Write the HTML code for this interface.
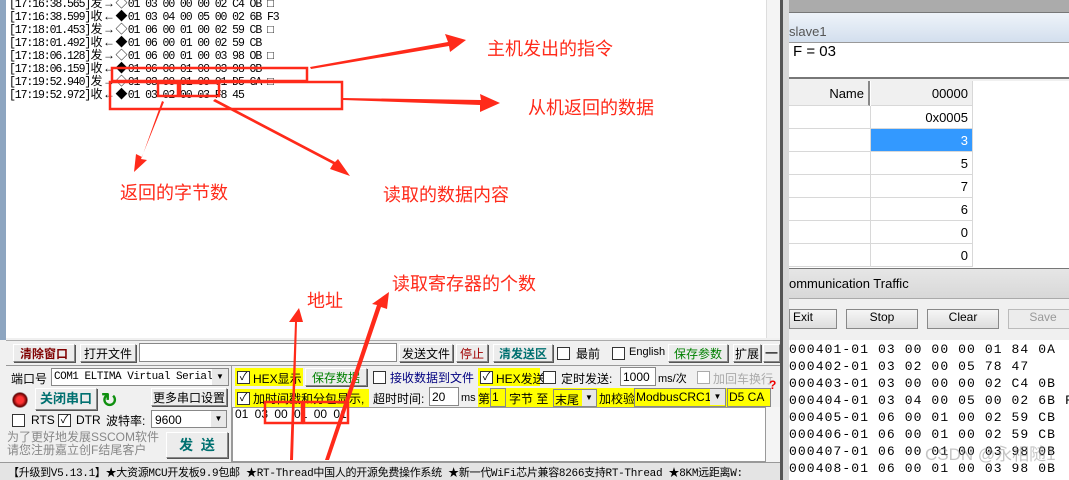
<!DOCTYPE html>
<html><head><meta charset="utf-8"><style>
*{margin:0;padding:0;box-sizing:border-box}
body{width:1069px;height:480px;overflow:hidden;background:#f0f0f0;position:relative;font-family:"Liberation Sans","Noto Sans CJK SC",sans-serif;font-size:12px}
.a{position:absolute;white-space:nowrap}
.m{font-family:"Liberation Mono","Noto Sans CJK SC",monospace}
.g{display:inline-block;width:12.5px;text-align:center;letter-spacing:0;font-size:12px}
.btn{position:absolute;background:#ececec;border:1px solid #888;border-top-color:#fff;border-left-color:#fff;box-shadow:1px 1px 0 #555;text-align:center;white-space:nowrap}
.cb{position:absolute;width:13px;height:13px;border:1px solid #333;background:#fff;font-size:11px;line-height:11px;text-align:center}
.y{background:#ffff00}
.cell{position:absolute;border-bottom:1px solid #d8d8d8;border-right:1px solid #d8d8d8;background:#fff;text-align:right;padding-right:4px;font-size:13px}
</style></head><body>
<!-- left app -->
<div class="a" style="left:0;top:0;width:6px;height:340px;background:#8da5c0"></div>
<div class="a" style="left:6px;top:0;width:760px;height:338px;background:#fff"></div>
<div class="a" style="left:766px;top:0;width:14px;height:338px;background:#f4f4f4;border-left:1px solid #ddd"></div>
<div class="a" style="left:780px;top:0;width:3px;height:480px;background:#555"></div>
<div class="a" style="left:783px;top:0;width:6px;height:480px;background:#d8d8d8"></div>
<div class="a m" style="left:9px;top:-2px;font-size:11.5px;line-height:12px;letter-spacing:-1.1px">
[17:16:38.565]<span class="g">发</span><span class="g">→</span><span class="g">◇</span>01 03 00 00 00 02 C4 OB □<br>
[17:16:38.599]<span class="g">收</span><span class="g">←</span><span class="g">◆</span>01 03 04 00 05 00 02 6B F3<br>
[17:18:01.453]<span class="g">发</span><span class="g">→</span><span class="g">◇</span>01 06 00 01 00 02 59 CB □<br>
[17:18:01.492]<span class="g">收</span><span class="g">←</span><span class="g">◆</span>01 06 00 01 00 02 59 CB<br>
[17:18:06.128]<span class="g">发</span><span class="g">→</span><span class="g">◇</span>01 06 00 01 00 03 98 OB □<br>
[17:18:06.159]<span class="g">收</span><span class="g">←</span><span class="g">◆</span>01 06 00 01 00 03 98 OB<br>
[17:19:52.940]<span class="g">发</span><span class="g">→</span><span class="g">◇</span>01 03 00 01 00 01 D5 CA □<br>
[17:19:52.972]<span class="g">收</span><span class="g">←</span><span class="g">◆</span>01 03 02 00 03 F8 45</div>

<!-- toolbar row -->
<div class="a" style="left:6px;top:340px;width:774px;height:123px;background:#f0f0f0;border-top:1px solid #aaa"></div>
<div class="btn" style="left:13px;top:344px;width:62px;height:18px;color:#800000;font-weight:bold;font-size:12px">清除窗口</div>
<div class="btn" style="left:80px;top:344px;width:56px;height:18px">打开文件</div>
<div class="a" style="left:139px;top:343px;width:258px;height:19px;background:#fff;border:1px solid #888"></div>
<div class="btn" style="left:399px;top:344px;width:54px;height:18px">发送文件</div>
<div class="btn" style="left:456px;top:344px;width:32px;height:18px;color:#a00000">停止</div>
<div class="btn" style="left:493px;top:344px;width:60px;height:18px;color:#007070;font-weight:bold">清发送区</div>
<div class="cb" style="left:557px;top:347px"></div><div class="a" style="left:576px;top:345px">最前</div>
<div class="cb" style="left:612px;top:347px"></div><div class="a" style="left:629px;top:346px;font-size:11px">English</div>
<div class="btn" style="left:668px;top:344px;width:60px;height:18px;color:#008000">保存参数</div>
<div class="btn" style="left:733px;top:344px;width:28px;height:18px">扩展</div>
<div class="btn" style="left:763px;top:344px;width:17px;height:18px;font-weight:bold">—</div>

<div class="a" style="left:6px;top:365px;width:774px;height:1px;background:#999"></div>
<div class="a" style="left:11px;top:370px">端口号</div>
<div class="a m" style="left:51px;top:368px;width:178px;height:18px;background:#fff;border:1px solid #888;font-size:11px;padding:2px 2px;letter-spacing:-0.5px;overflow:hidden">COM1 ELTIMA Virtual Serial</div>
<div class="a" style="left:212px;top:369px;width:16px;height:16px;background:#e8e8e8;font-size:8px;text-align:center;line-height:16px">▼</div>
<div class="a" style="left:12px;top:392px;width:16px;height:16px;border-radius:50%;background:radial-gradient(#f33 30%,#600 60%,#bbb 70%)"></div>
<div class="btn" style="left:35px;top:388px;width:62px;height:22px;color:#007070;font-weight:bold;font-size:13px;line-height:20px">关闭串口</div>
<div class="a" style="left:101px;top:388px;color:#109010;font-size:20px;font-weight:bold">↻</div>
<div class="btn" style="left:151px;top:388px;width:76px;height:18px">更多串口设置</div>
<div class="cb" style="left:12px;top:414px"></div><div class="a" style="left:31px;top:413px">RTS</div>
<div class="cb" style="left:58px;top:414px">✓</div><div class="a" style="left:76px;top:413px">DTR</div>
<div class="a" style="left:106px;top:412px">波特率:</div>
<div class="a" style="left:151px;top:410px;width:76px;height:18px;background:#fff;border:1px solid #888;padding:2px 3px">9600</div>
<div class="a" style="left:211px;top:411px;width:15px;height:16px;background:#e8e8e8;font-size:8px;text-align:center;line-height:16px">▼</div>
<div class="a" style="left:7px;top:431px;color:#888;font-size:12px;line-height:13px">为了更好地发展SSCOM软件<br>请您注册嘉立创F结尾客户</div>
<div class="btn" style="left:166px;top:432px;width:62px;height:26px;color:#007070;font-weight:bold;font-size:14px;line-height:24px">发&nbsp;&nbsp;送</div>
<div class="a" style="left:231px;top:366px;width:1px;height:97px;background:#999"></div>

<div class="a y" style="left:235px;top:368px;width:68px;height:18px"></div>
<div class="cb" style="left:237px;top:371px">✓</div><div class="a" style="left:253px;top:370px;color:#000">HEX显示</div>
<div class="btn" style="left:305px;top:368px;width:62px;height:18px;color:#008000">保存数据</div>
<div class="cb" style="left:373px;top:371px"></div><div class="a" style="left:390px;top:369px;color:#000080">接收数据到文件</div>
<div class="a y" style="left:478px;top:368px;width:62px;height:18px"></div>
<div class="cb" style="left:480px;top:371px">✓</div><div class="a" style="left:496px;top:370px">HEX发送</div>
<div class="cb" style="left:543px;top:371px"></div><div class="a" style="left:561px;top:370px">定时发送:</div>
<div class="a" style="left:620px;top:367px;width:36px;height:19px;background:#fff;border:1px solid #888;padding:2px">1000</div>
<div class="a" style="left:658px;top:370px;font-size:11px">ms/次</div>
<div class="cb" style="left:697px;top:371px;border-color:#aaa"></div><div class="a" style="left:713px;top:370px;color:#aaa">加回车换行</div>
<div class="a" style="left:769px;top:378px;color:#e00;font-weight:bold;font-size:12px">?</div>

<div class="a y" style="left:235px;top:389px;width:134px;height:18px"></div>
<div class="cb" style="left:237px;top:392px">✓</div><div class="a" style="left:253px;top:390px">加时间戳和分包显示,</div>
<div class="a" style="left:373px;top:390px">超时时间:</div>
<div class="a" style="left:429px;top:387px;width:30px;height:19px;background:#fff;border:1px solid #888;padding:2px">20</div>
<div class="a" style="left:461px;top:392px;font-size:11px">ms</div>
<div class="a y" style="left:478px;top:388px;width:292px;height:20px"></div>
<div class="a" style="left:478px;top:390px">第</div>
<div class="a" style="left:490px;top:388px;width:16px;height:19px;border:1px solid #888;padding:1px">1</div>
<div class="a" style="left:509px;top:390px">字节 至</div>
<div class="a" style="left:553px;top:389px;width:44px;height:18px;border:1px solid #888;padding:1px">末尾</div>
<div class="a" style="left:582px;top:390px;width:14px;height:16px;background:#e8e8e8;font-size:8px;text-align:center;line-height:16px">▼</div>
<div class="a" style="left:599px;top:390px">加校验</div>
<div class="a" style="left:634px;top:388px;width:92px;height:19px;border:1px solid #888;padding:1px;overflow:hidden">ModbusCRC16</div>
<div class="a" style="left:710px;top:389px;width:15px;height:16px;background:#e8e8e8;font-size:8px;text-align:center;line-height:16px">▼</div>
<div class="a" style="left:727px;top:388px;width:44px;height:19px;border:1px solid #888;padding:1px">D5 CA</div>
<div class="a" style="left:232px;top:407px;width:534px;height:55px;background:#fff;border:1px solid #999"></div>
<div class="a" style="left:766px;top:407px;width:14px;height:55px;background:#f4f4f4"></div>
<div class="a" style="left:235px;top:407px;font-size:12px;word-spacing:3px">01 03 00 01 00 01</div>

<!-- status -->
<div class="a" style="left:0;top:462px;width:780px;height:18px;background:#e4e4e4;border-top:1px solid #999"></div>
<div class="a m" style="left:8px;top:464px;font-size:11px;letter-spacing:-0.3px">【升级到V5.13.1】★大资源MCU开发板9.9包邮 ★RT-Thread中国人的开源免费操作系统 ★新一代WiFi芯片兼容8266支持RT-Thread ★8KM远距离W:</div>

<!-- right app -->
<div class="a" style="left:789px;top:0;width:280px;height:13px;background:#ababab;border-bottom:1px solid #777"></div>
<div class="a" style="left:789px;top:13px;width:280px;height:30px;background:linear-gradient(#eef3f9,#d3dfee);border-bottom:1px solid #999"></div>
<div class="a" style="left:789px;top:24px;color:#555;font-size:13px">slave1</div>
<div class="a" style="left:789px;top:43px;width:280px;height:36px;background:#fff;border-bottom:2px solid #777"></div>
<div class="a" style="left:793px;top:43px;font-size:15px">F = 03</div>
<div class="a" style="left:789px;top:81px;width:280px;height:188px;background:#fff"></div>
<div class="cell" style="left:789px;top:81px;width:81px;height:25px;background:#f0f0f0;border-right:2px solid #888;line-height:25px">Name</div>
<div class="cell" style="left:871px;top:81px;width:102px;height:25px;background:#f0f0f0;line-height:25px">00000</div>
<div class="cell" style="left:789px;top:106px;width:82px;height:23px"></div><div class="cell" style="left:871px;top:106px;width:102px;height:23px;line-height:23px">0x0005</div>
<div class="cell" style="left:789px;top:129px;width:82px;height:23px"></div><div class="cell" style="left:871px;top:129px;width:102px;height:23px;line-height:23px;background:#3399ff;color:#fff">3</div>
<div class="cell" style="left:789px;top:152px;width:82px;height:23px"></div><div class="cell" style="left:871px;top:152px;width:102px;height:23px;line-height:23px">5</div>
<div class="cell" style="left:789px;top:175px;width:82px;height:23px"></div><div class="cell" style="left:871px;top:175px;width:102px;height:23px;line-height:23px">7</div>
<div class="cell" style="left:789px;top:198px;width:82px;height:23px"></div><div class="cell" style="left:871px;top:198px;width:102px;height:23px;line-height:23px">6</div>
<div class="cell" style="left:789px;top:221px;width:82px;height:23px"></div><div class="cell" style="left:871px;top:221px;width:102px;height:23px;line-height:23px">0</div>
<div class="cell" style="left:789px;top:244px;width:82px;height:23px"></div><div class="cell" style="left:871px;top:244px;width:102px;height:23px;line-height:23px">0</div>
<div class="a" style="left:789px;top:268px;width:280px;height:31px;background:linear-gradient(#e6e6e6,#d8d8d8);border-top:1px solid #777;border-bottom:1px solid #aaa"></div>
<div class="a" style="left:789px;top:276px;font-size:13px">ommunication Traffic</div>
<div class="a" style="left:789px;top:300px;width:280px;height:40px;background:#f0f0f0"></div>
<div class="btn" style="left:789px;top:309px;width:48px;height:20px;border:1px solid #888;box-shadow:none;background:linear-gradient(#f6f6f6,#ddd);text-align:left;padding-left:3px">Exit</div>
<div class="btn" style="left:846px;top:309px;width:72px;height:20px;border:1px solid #888;box-shadow:none;background:linear-gradient(#f6f6f6,#ddd)">Stop</div>
<div class="btn" style="left:927px;top:309px;width:72px;height:20px;border:1px solid #888;box-shadow:none;background:linear-gradient(#f6f6f6,#ddd)">Clear</div>
<div class="btn" style="left:1008px;top:309px;width:70px;height:20px;border:1px solid #bbb;box-shadow:none;color:#999">Save</div>
<div class="a" style="left:789px;top:340px;width:280px;height:140px;background:#fff"></div>
<div class="a m" style="left:789px;top:341px;font-size:13px;line-height:17px;letter-spacing:1.1px">000401-01 03 00 00 00 01 84 0A<br>000402-01 03 02 00 05 78 47<br>000403-01 03 00 00 00 02 C4 0B<br>000404-01 03 04 00 05 00 02 6B F<br>000405-01 06 00 01 00 02 59 CB<br>000406-01 06 00 01 00 02 59 CB<br>000407-01 06 00 01 00 03 98 0B<br>000408-01 06 00 01 00 03 98 0B</div>
<div class="a" style="left:925px;top:440px;font-size:17px;color:rgba(150,150,150,.55)">CSDN @永相随1</div>

<!-- annotations -->
<svg class="a" style="left:0;top:0" width="1069" height="480">
<g fill="none" stroke="#ff2a1a" stroke-width="2.5">
<rect x="112" y="68" width="195" height="13"/>
<rect x="110" y="82" width="232" height="27"/>
<rect x="158" y="83" width="20" height="13"/>
<rect x="180" y="83" width="39" height="13"/>
<rect x="265" y="402" width="37" height="21"/>
<rect x="304" y="402" width="44" height="21"/>
</g>
<g fill="#ff2a1a">
<polygon points="310,67 448,42 445,34 466,40 450,52 449,46 311,69"/>
<polygon points="343,98 481,100 480,94 500,103 480,112 480,105 343,100"/>
<polygon points="162,101 142,157 136,154 134,172 147,160 141,159 164,102"/>
<polygon points="213,101 333,164 330,169 350,176 338,159 335,162 215,99"/>
<polygon points="290,460 295,322 289,322 299,308 303,322 297,322 293,460"/>
<polygon points="325,460 377,305 372,304 389,292 387,309 381,307 329,460"/>
</g>
<g fill="#ff2a1a" font-size="18" font-family="Liberation Sans,Noto Sans CJK SC,sans-serif">
<text x="487" y="55">主机发出的指令</text>
<text x="528" y="114">从机返回的数据</text>
<text x="120" y="199">返回的字节数</text>
<text x="383" y="201">读取的数据内容</text>
<text x="307" y="307">地址</text>
<text x="392" y="290">读取寄存器的个数</text>
</g>
</svg>
</body></html>
